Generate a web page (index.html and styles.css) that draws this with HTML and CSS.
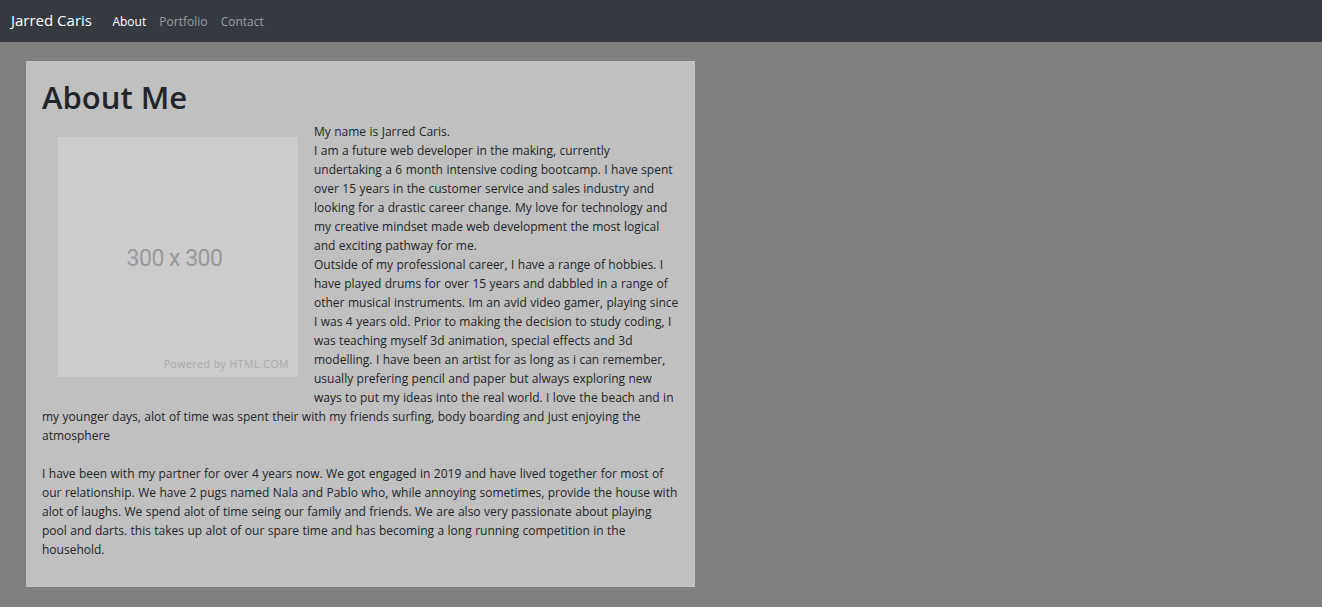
FILE: index.html
```html
<!DOCTYPE html>
<html lang="en">
<head>
<meta charset="utf-8">
<title>About Me</title>
<link rel="stylesheet" href="styles.css">
</head>
<body>
<nav class="navbar">
  <a class="brand" href="#">Jarred Caris</a>
  <ul class="nav">
    <li><a class="nav-link active" href="#">About</a></li>
    <li><a class="nav-link" href="#">Portfolio</a></li>
    <li><a class="nav-link" href="#">Contact</a></li>
  </ul>
</nav>
<main class="page">
  <section class="card">
    <h1 class="title">About Me</h1>
    <div class="photo">
      <span class="photo-size">300 x 300</span>
      <span class="photo-credit">Powered by HTML.COM</span>
    </div>
    <p class="bio">My name is Jarred Caris.<br>I am a future web developer in the making, currently undertaking a 6 month intensive coding bootcamp. I have spent over 15 years in the customer service and sales industry and looking for a drastic career change. My love for technology and my creative mindset made web development the most logical and exciting pathway for me.<br>Outside of my professional career, I have a range of hobbies. I have played drums for over 15 years and dabbled in a range of other musical instruments. Im an avid video gamer, playing since I was 4 years old. Prior to making the decision to study coding, I was teaching myself 3d animation, special effects and 3d modelling. I have been an artist for as long as i can remember, usually prefering pencil and paper but always exploring new ways to put my ideas into the real world. I love the beach and in my younger days, alot of time was spent their with my friends surfing, body boarding and just enjoying the atmosphere<br><br>I have been with my partner for over 4 years now. We got engaged in 2019 and have lived together for most of our relationship. We have 2 pugs named Nala and Pablo who, while annoying sometimes, provide the house with alot of laughs. We spend alot of time seing our family and friends. We are also very passionate about playing pool and darts. this takes up alot of our spare time and has becoming a long running competition in the household.</p>
  </section>
</main>
</body>
</html>
```
FILE: styles.css
```css
html, body {
  margin: 0;
  padding: 0;
}
body {
  background: #808080;
  font-family: "Open Sans", "Noto Sans", sans-serif;
  color: #212529;
  min-height: 607px;
}
.navbar {
  display: flex;
  align-items: center;
  height: 42px;
  padding: 0 12px 0 11px;
  background: #343a40;
}
.brand {
  font-size: 15px;
  color: #fff;
  text-decoration: none;
  margin-right: 14px;
  line-height: 1;
  padding-bottom: 2px;
}
.nav {
  display: flex;
  list-style: none;
  margin: 0;
  padding: 0;
}
.nav-link {
  display: block;
  padding: 0 6.8px 0 6.4px;
  font-size: 12px;
  color: rgba(255, 255, 255, 0.5);
  text-decoration: none;
}
.nav-link.active {
  color: #fff;
}
.page {
  padding: 19px 26px 20px;
}
.card {
  width: 637px;
  padding: 16px 16px 16px;
  background: #c0c0c0;
}
.title {
  margin: 0 0 5px;
  font-size: 31px;
  font-weight: 600;
  line-height: 40px;
  color: #212529;
}
.photo {
  float: left;
  position: relative;
  width: 240px;
  height: 240px;
  margin: 15px 16px 16px 16px;
  background: #cccccc;
  display: flex;
  align-items: center;
  justify-content: center;
}
.photo-size {
  font-family: Roboto, "Liberation Sans", sans-serif;
  font-size: 23px;
  color: #999999;
  letter-spacing: -0.5px;
  margin-right: 7px;
  margin-top: 2px;
}
.photo-credit {
  position: absolute;
  right: 9px;
  bottom: 6px;
  font-family: "Open Sans", sans-serif;
  font-size: 10.5px;
  letter-spacing: 0.5px;
  color: #a9a9a9;
}
.bio {
  margin: 0 0 12px;
  font-size: 12px;
  line-height: 19px;
  word-spacing: 0.3px;
}
```
